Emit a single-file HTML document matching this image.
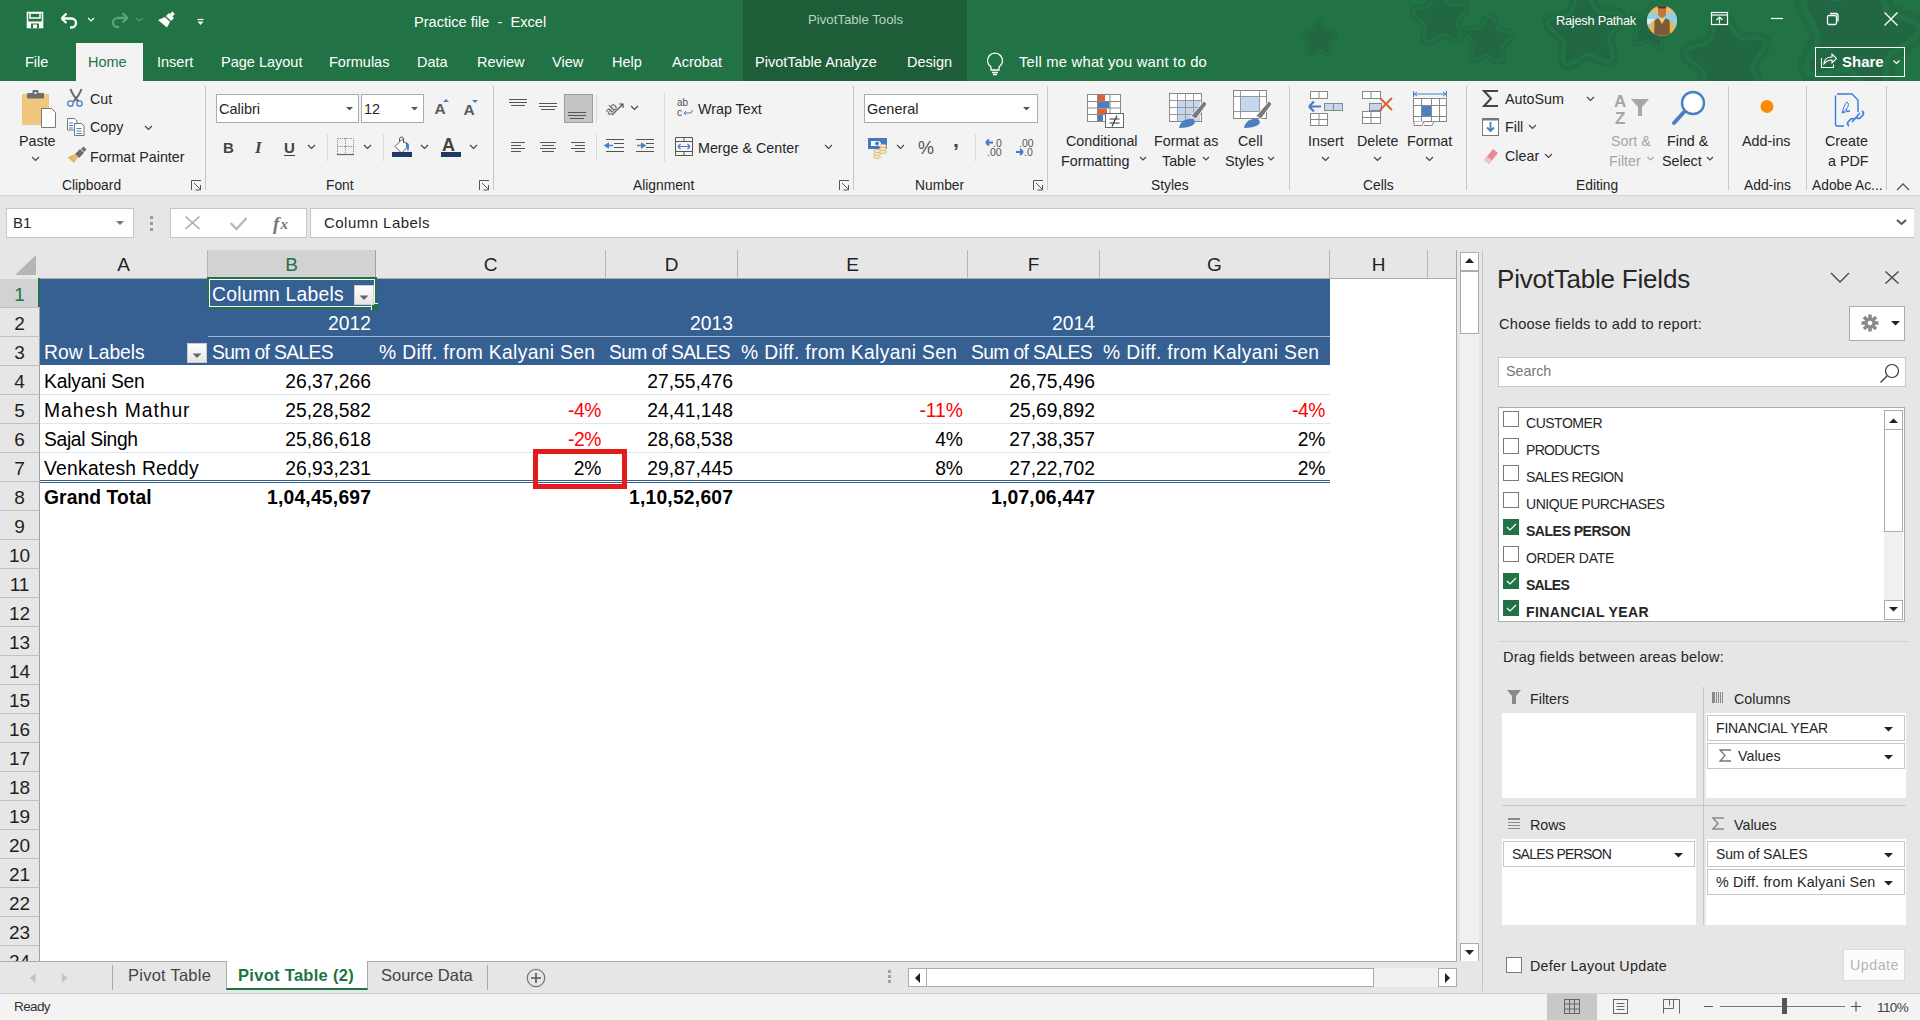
<!DOCTYPE html>
<html><head><meta charset="utf-8">
<style>
*{margin:0;padding:0;box-sizing:border-box}
html,body{width:1920px;height:1020px;overflow:hidden;background:#fff;font-family:"Liberation Sans",sans-serif;color:#262626}
.a{position:absolute}
.t{position:absolute;white-space:nowrap;line-height:1}
svg{position:absolute;overflow:visible}
/* title */
#title{left:0;top:0;width:1920px;height:81px;background:#217346}
#ctx{left:743px;top:0;width:224px;height:81px;background:#1d5e38}
.tab{position:absolute;top:54.5px;font-size:14.5px;color:#fff;white-space:nowrap;line-height:1}
#hometab{left:76px;top:43px;width:67px;height:38px;background:#f3f3f3}
/* ribbon */
#ribbon{left:0;top:81px;width:1920px;height:115px;background:#f3f3f3;border-bottom:1px solid #d6d6d6}
.rl{position:absolute;font-size:14.3px;color:#262626;white-space:nowrap;line-height:1}
.gl{position:absolute;top:179px;font-size:13.8px;color:#262626;white-space:nowrap;line-height:1}
.sep{position:absolute;width:1px;background:#c8c8c8}
.dis{color:#a6a6a6}
/* formula bar */
#fbar{left:0;top:196px;width:1920px;height:54px;background:#e6e6e6}
.box{position:absolute;background:#fff;border:1px solid #c6c6c6}
/* sheet */
#sheet{left:0;top:250px;width:1456px;height:711px;background:#fff}
.colh{position:absolute;top:250px;height:29px;background:#e6e6e6;border-right:1px solid #b4b4b4;border-bottom:1px solid #ababab;font-size:19px;color:#1f1f1f;text-align:center;line-height:30px}
.rowh{position:absolute;left:0;width:40px;height:29px;background:#e6e6e6;border-right:1px solid #9f9f9f;border-bottom:1px solid #c0c0c0;font-size:19px;color:#1f1f1f;text-align:center;line-height:31px}
.c{position:absolute;font-size:19.3px;color:#000;white-space:nowrap;line-height:1}
.w{color:#fff}
.r{color:#f00}
.b{font-weight:bold}
</style></head><body>

<!-- TITLE BAR -->
<div id="title" class="a"></div>
<div id="ctx" class="a"></div>
<div id="hometab" class="a"></div>
<!-- stars -->
<svg width="1920" height="81" style="left:0;top:0">
 
 <g fill="none" stroke="#216a42" stroke-width="7"><path d="M0,-20 C4,-20 6,-9 9,-7 C12,-5 22,-7 23,-3 C24,1 15,6 14,10 C13,14 18,22 14,24 C10,26 3,19 0,19 C-3,19 -10,26 -14,24 C-18,22 -13,14 -14,10 C-15,6 -24,1 -23,-3 C-22,-7 -12,-5 -9,-7 C-6,-9 -4,-20 0,-20Z" transform="translate(1319,36) scale(0.72)"/>
  <path d="M0,-20 C4,-20 6,-9 9,-7 C12,-5 22,-7 23,-3 C24,1 15,6 14,10 C13,14 18,22 14,24 C10,26 3,19 0,19 C-3,19 -10,26 -14,24 C-18,22 -13,14 -14,10 C-15,6 -24,1 -23,-3 C-22,-7 -12,-5 -9,-7 C-6,-9 -4,-20 0,-20Z" transform="translate(1440,13) scale(1.15) rotate(-5)"/>
  <path d="M0,-20 C4,-20 6,-9 9,-7 C12,-5 22,-7 23,-3 C24,1 15,6 14,10 C13,14 18,22 14,24 C10,26 3,19 0,19 C-3,19 -10,26 -14,24 C-18,22 -13,14 -14,10 C-15,6 -24,1 -23,-3 C-22,-7 -12,-5 -9,-7 C-6,-9 -4,-20 0,-20Z" transform="translate(1489,36) scale(1.0) rotate(5)"/>
  <path d="M0,-20 C4,-20 6,-9 9,-7 C12,-5 22,-7 23,-3 C24,1 15,6 14,10 C13,14 18,22 14,24 C10,26 3,19 0,19 C-3,19 -10,26 -14,24 C-18,22 -13,14 -14,10 C-15,6 -24,1 -23,-3 C-22,-7 -12,-5 -9,-7 C-6,-9 -4,-20 0,-20Z" transform="translate(1585,24) scale(1.6) rotate(-5)"/>
  <path d="M0,-20 C4,-20 6,-9 9,-7 C12,-5 22,-7 23,-3 C24,1 15,6 14,10 C13,14 18,22 14,24 C10,26 3,19 0,19 C-3,19 -10,26 -14,24 C-18,22 -13,14 -14,10 C-15,6 -24,1 -23,-3 C-22,-7 -12,-5 -9,-7 C-6,-9 -4,-20 0,-20Z" transform="translate(1651,24) scale(0.9) rotate(10)"/>
  <path d="M0,-20 C4,-20 6,-9 9,-7 C12,-5 22,-7 23,-3 C24,1 15,6 14,10 C13,14 18,22 14,24 C10,26 3,19 0,19 C-3,19 -10,26 -14,24 C-18,22 -13,14 -14,10 C-15,6 -24,1 -23,-3 C-22,-7 -12,-5 -9,-7 C-6,-9 -4,-20 0,-20Z" transform="translate(1726,52) scale(1.75) rotate(-8)"/>
  <path d="M0,-20 C4,-20 6,-9 9,-7 C12,-5 22,-7 23,-3 C24,1 15,6 14,10 C13,14 18,22 14,24 C10,26 3,19 0,19 C-3,19 -10,26 -14,24 C-18,22 -13,14 -14,10 C-15,6 -24,1 -23,-3 C-22,-7 -12,-5 -9,-7 C-6,-9 -4,-20 0,-20Z" transform="translate(1860,22) scale(2.6) rotate(15)"/></g><g fill="#226743" stroke="#217346" stroke-width="2.2"><path d="M0,-20 C4,-20 6,-9 9,-7 C12,-5 22,-7 23,-3 C24,1 15,6 14,10 C13,14 18,22 14,24 C10,26 3,19 0,19 C-3,19 -10,26 -14,24 C-18,22 -13,14 -14,10 C-15,6 -24,1 -23,-3 C-22,-7 -12,-5 -9,-7 C-6,-9 -4,-20 0,-20Z" transform="translate(1319,36) scale(0.72)"/>
  <path d="M0,-20 C4,-20 6,-9 9,-7 C12,-5 22,-7 23,-3 C24,1 15,6 14,10 C13,14 18,22 14,24 C10,26 3,19 0,19 C-3,19 -10,26 -14,24 C-18,22 -13,14 -14,10 C-15,6 -24,1 -23,-3 C-22,-7 -12,-5 -9,-7 C-6,-9 -4,-20 0,-20Z" transform="translate(1440,13) scale(1.15) rotate(-5)"/>
  <path d="M0,-20 C4,-20 6,-9 9,-7 C12,-5 22,-7 23,-3 C24,1 15,6 14,10 C13,14 18,22 14,24 C10,26 3,19 0,19 C-3,19 -10,26 -14,24 C-18,22 -13,14 -14,10 C-15,6 -24,1 -23,-3 C-22,-7 -12,-5 -9,-7 C-6,-9 -4,-20 0,-20Z" transform="translate(1489,36) scale(1.0) rotate(5)"/>
  <path d="M0,-20 C4,-20 6,-9 9,-7 C12,-5 22,-7 23,-3 C24,1 15,6 14,10 C13,14 18,22 14,24 C10,26 3,19 0,19 C-3,19 -10,26 -14,24 C-18,22 -13,14 -14,10 C-15,6 -24,1 -23,-3 C-22,-7 -12,-5 -9,-7 C-6,-9 -4,-20 0,-20Z" transform="translate(1585,24) scale(1.6) rotate(-5)"/>
  <path d="M0,-20 C4,-20 6,-9 9,-7 C12,-5 22,-7 23,-3 C24,1 15,6 14,10 C13,14 18,22 14,24 C10,26 3,19 0,19 C-3,19 -10,26 -14,24 C-18,22 -13,14 -14,10 C-15,6 -24,1 -23,-3 C-22,-7 -12,-5 -9,-7 C-6,-9 -4,-20 0,-20Z" transform="translate(1651,24) scale(0.9) rotate(10)"/>
  <path d="M0,-20 C4,-20 6,-9 9,-7 C12,-5 22,-7 23,-3 C24,1 15,6 14,10 C13,14 18,22 14,24 C10,26 3,19 0,19 C-3,19 -10,26 -14,24 C-18,22 -13,14 -14,10 C-15,6 -24,1 -23,-3 C-22,-7 -12,-5 -9,-7 C-6,-9 -4,-20 0,-20Z" transform="translate(1726,52) scale(1.75) rotate(-8)"/>
  <path d="M0,-20 C4,-20 6,-9 9,-7 C12,-5 22,-7 23,-3 C24,1 15,6 14,10 C13,14 18,22 14,24 C10,26 3,19 0,19 C-3,19 -10,26 -14,24 C-18,22 -13,14 -14,10 C-15,6 -24,1 -23,-3 C-22,-7 -12,-5 -9,-7 C-6,-9 -4,-20 0,-20Z" transform="translate(1860,22) scale(2.6) rotate(15)"/></g>
</svg>
<!-- QAT icons -->
<svg width="240" height="43" style="left:0;top:0">
 <!-- save -->
 <path d="M27.5,12.5 h15 v15 h-15z" fill="none" stroke="#fff" stroke-width="1.6"/>
 <rect x="30" y="13" width="10" height="5" fill="none" stroke="#fff" stroke-width="1.5"/>
 <rect x="27" y="21.5" width="16" height="6.5" fill="#fff"/>
 <rect x="31" y="23.5" width="8" height="4.5" fill="#217346"/>
 <rect x="33" y="24.5" width="4" height="3.5" fill="#fff"/>
 <!-- undo -->
 <path d="M63,18.5 h8.5 a4.5,4.5 0 0 1 0,9 h-1.5" fill="none" stroke="#fff" stroke-width="2.3"/>
 <path d="M61.5,18.5 l5,-5 M61.5,18.5 l5,4.5" fill="none" stroke="#fff" stroke-width="2.3"/>
 <path d="M88,18 l3,3 l3,-3" fill="none" stroke="#fff" stroke-width="1.2"/>
 <!-- redo -->
 <path d="M126,18 h-8.5 a4.5,4.5 0 0 0 0,9 h1.5" fill="none" stroke="#5aa27a" stroke-width="2.3"/>
 <path d="M127.5,18 l-5,-5 M127.5,18 l-5,4.5" fill="none" stroke="#5aa27a" stroke-width="2.3"/>
 <path d="M136,18 l3.5,3 l3.5,-3" fill="none" stroke="#4f9a70" stroke-width="1.2"/>
 <!-- brush -->
 <path d="M158,20 l7,-3 l5,5 l-3,5.5z" fill="#fff"/>
 <path d="M166,16 l3,-3 l5,5 l-3,3z" fill="#fff"/>
 <rect x="170.5" y="12" width="3.5" height="3.5" transform="rotate(45 172 14)" fill="#fff"/>
 <!-- customize -->
 <path d="M197.5,19.5 h6" stroke="#fff" stroke-width="1.2"/>
 <path d="M197.5,21.5 h6 l-3,3.5z" fill="#fff"/>
</svg>
<div class="t" style="left:414px;top:15px;font-size:14.6px;color:#fff">Practice file&nbsp; -&nbsp; Excel</div>
<div class="t" style="left:808px;top:13px;font-size:13.2px;color:#b9d2c3">PivotTable Tools</div>
<div class="t" style="left:1556px;top:15px;font-size:12.8px;color:#fff;letter-spacing:-0.25px">Rajesh Pathak</div>
<!-- avatar -->
<svg width="40" height="40" style="left:1645px;top:0">
 <defs><clipPath id="avc"><circle cx="17" cy="20.8" r="15"/></clipPath></defs>
 <g clip-path="url(#avc)">
  <rect x="0" y="0" width="40" height="40" fill="#f2bd62"/>
  <rect x="0" y="13" width="34" height="14" fill="#8fd0e8"/>
  <rect x="0" y="19" width="12" height="5" fill="#d8eef6"/>
  <path d="M3,40 L6,22 Q17,16 28,22 L31,40z" fill="#eab552"/>
  <path d="M9,40 L9.5,20 Q17,15 24.5,20 L25,40z" fill="#7c5a3a"/>
  <path d="M13.5,18 L17,24 L20.5,18z" fill="#f0d070"/>
  <rect x="13" y="6" width="8" height="11" rx="3.5" fill="#c2753c"/>
  <rect x="12.5" y="5.5" width="9" height="3" rx="1.5" fill="#5a3a26"/>
 </g>
</svg>
<svg width="260" height="43" style="left:1660px;top:0">
 <!-- presentation -->
 <rect x="51.5" y="12.5" width="16" height="12" fill="none" stroke="#fff" stroke-width="1.2"/>
 <path d="M51.5,15 h16" stroke="#fff" stroke-width="1.2"/>
 <path d="M59.5,23.5 v-6 M56.5,20 l3,-3 l3,3" fill="none" stroke="#fff" stroke-width="1.2"/>
 <!-- minimize -->
 <path d="M111,18.5 h12" stroke="#fff" stroke-width="1.2"/>
 <!-- restore -->
 <rect x="167.5" y="15.5" width="9" height="9" rx="1.5" fill="none" stroke="#fff" stroke-width="1.3"/>
 <path d="M170,13.5 h6 a2,2 0 0 1 2,2 v6" fill="none" stroke="#fff" stroke-width="1.3"/>
 <!-- close -->
 <path d="M224.5,12.5 l13,13 M237.5,12.5 l-13,13" stroke="#fff" stroke-width="1.4"/>
</svg>
<!-- tabs -->
<div class="tab" style="left:25px">File</div>
<div class="tab" style="left:88px;color:#217346">Home</div>
<div class="tab" style="left:157px">Insert</div>
<div class="tab" style="left:221px">Page Layout</div>
<div class="tab" style="left:329px">Formulas</div>
<div class="tab" style="left:417px">Data</div>
<div class="tab" style="left:477px">Review</div>
<div class="tab" style="left:552px">View</div>
<div class="tab" style="left:612px">Help</div>
<div class="tab" style="left:672px">Acrobat</div>
<div class="tab" style="left:755px">PivotTable Analyze</div>
<div class="tab" style="left:907px">Design</div>
<svg width="30" height="30" style="left:980px;top:50px">
 <path d="M11,17 a7.5,7.5 0 1 1 8,0 v3 h-8z" fill="none" stroke="#fff" stroke-width="1.3"/>
 <path d="M12,22.5 h6 M13,24.5 h4" stroke="#fff" stroke-width="1.3"/>
</svg>
<div class="tab" style="left:1019px;font-size:14.8px;letter-spacing:0.2px">Tell me what you want to do</div>
<div class="a" style="left:1815px;top:47px;width:90px;height:30px;border:1px solid #fff"></div>
<svg width="30" height="30" style="left:1819px;top:48px">
 <path d="M2.5,10 v9.5 h12 v-3" fill="none" stroke="#fff" stroke-width="1.1"/>
 <path d="M5,16 q0,-7 8,-7 v-3 l4.5,4.5 l-4.5,4.5 v-3 q-5,0 -8,4z" fill="none" stroke="#fff" stroke-width="1.1"/>
</svg>
<div class="t" style="left:1842px;top:54px;font-size:15px;font-weight:bold;color:#fff">Share</div>
<svg width="14" height="14" style="left:1892px;top:56px"><path d="M1.5,4.5 l3,3 l3,-3" fill="none" stroke="#fff" stroke-width="1.2"/></svg>

<!-- RIBBON -->
<div id="ribbon" class="a"></div>
<!-- separators -->
<div class="sep" style="left:205px;top:86px;height:104px"></div>
<div class="sep" style="left:493px;top:86px;height:104px"></div>
<div class="sep" style="left:853px;top:86px;height:104px"></div>
<div class="sep" style="left:1047px;top:86px;height:104px"></div>
<div class="sep" style="left:1289px;top:86px;height:104px"></div>
<div class="sep" style="left:1466px;top:86px;height:104px"></div>
<div class="sep" style="left:1728px;top:86px;height:104px"></div>
<div class="sep" style="left:1806px;top:86px;height:104px"></div>
<div class="sep" style="left:1886px;top:86px;height:104px"></div>
<div class="sep" style="left:327px;top:134px;height:27px;background:#d8d8d8"></div>
<div class="sep" style="left:383px;top:134px;height:27px;background:#d8d8d8"></div>
<div class="sep" style="left:596px;top:95px;height:27px;background:#d8d8d8"></div>
<div class="sep" style="left:596px;top:134px;height:27px;background:#d8d8d8"></div>
<div class="sep" style="left:664px;top:93px;height:69px;background:#d8d8d8"></div>
<div class="sep" style="left:975px;top:134px;height:27px;background:#d8d8d8"></div>
<!-- group labels -->
<div class="gl" style="left:62px">Clipboard</div>
<div class="gl" style="left:326px">Font</div>
<div class="gl" style="left:633px">Alignment</div>
<div class="gl" style="left:915px">Number</div>
<div class="gl" style="left:1151px">Styles</div>
<div class="gl" style="left:1363px">Cells</div>
<div class="gl" style="left:1576px">Editing</div>
<div class="gl" style="left:1744px">Add-ins</div>
<div class="gl" style="left:1812px">Adobe Ac...</div>
<!-- launchers -->
<svg width="1920" height="200" style="left:0;top:0">
 <g fill="none" stroke="#555" stroke-width="1">
  <path d="M191.5,190 v-9.5 h9.5 M194,183 l6.5,6.5 M200.5,185 v5 h-5"/>
  <path d="M479.5,190 v-9.5 h9.5 M482,183 l6.5,6.5 M488.5,185 v5 h-5"/>
  <path d="M839.5,190 v-9.5 h9.5 M842,183 l6.5,6.5 M848.5,185 v5 h-5"/>
  <path d="M1033.5,190 v-9.5 h9.5 M1036,183 l6.5,6.5 M1042.5,185 v5 h-5"/>
  <path d="M1897,190 l6,-6 l6,6" stroke-width="1.3"/>
 </g>
 <!-- chevrons -->
 <g fill="none" stroke="#444" stroke-width="1.2">
  <path d="M32,157 l3.5,3.5 l3.5,-3.5"/>
  <path d="M145,126 l3.5,3.5 l3.5,-3.5"/>
  <path d="M308,145 l3.5,3.5 l3.5,-3.5"/>
  <path d="M364,145 l3.5,3.5 l3.5,-3.5"/>
  <path d="M421,145 l3.5,3.5 l3.5,-3.5"/>
  <path d="M470,145 l3.5,3.5 l3.5,-3.5"/>
  <path d="M631,106 l3.5,3.5 l3.5,-3.5"/>
  <path d="M825,145 l3.5,3.5 l3.5,-3.5"/>
  <path d="M897,145 l3.5,3.5 l3.5,-3.5"/>
  <path d="M1322,157 l3.5,3.5 l3.5,-3.5"/>
  <path d="M1374,157 l3.5,3.5 l3.5,-3.5"/>
  <path d="M1426,157 l3.5,3.5 l3.5,-3.5"/>
  <path d="M1587,97 l3.5,3.5 l3.5,-3.5"/>
  <path d="M1529,125 l3.5,3.5 l3.5,-3.5"/>
  <path d="M1545,154 l3.5,3.5 l3.5,-3.5"/>
  <path d="M1140,157 l3,3 l3,-3"/>
  <path d="M1203,157 l3,3 l3,-3"/>
  <path d="M1268,157 l3,3 l3,-3"/>
  <path d="M1707,157 l3,3 l3,-3"/>
  <path d="M1647.5,157 l3,3 l3,-3" stroke="#aaa"/>
 </g>
</svg>
<!-- Clipboard -->
<svg width="200" height="200" style="left:0;top:0">
 <rect x="22" y="94" width="27" height="31" rx="1" fill="#f0c77f"/>
 <rect x="27" y="93" width="17" height="5.5" rx="1" fill="#6d6d6d"/>
 <rect x="32.5" y="90" width="6" height="4" rx="1" fill="#6d6d6d"/>
 <rect x="34.5" y="92" width="2" height="2" fill="#f3f3f3"/>
 <path d="M41.5,108.5 h10 l4,4 v15 h-14z" fill="#fff" stroke="#777" stroke-width="1"/>
 <!-- scissors -->
 <path d="M70.5,89 q2,6 8,12.5 M81.5,89 q-2,6 -8,12.5" fill="none" stroke="#666" stroke-width="2"/>
 <circle cx="70.5" cy="103.5" r="2.7" fill="none" stroke="#4a7fc1" stroke-width="1.3"/>
 <circle cx="79.5" cy="103.5" r="2.7" fill="none" stroke="#4a7fc1" stroke-width="1.3"/>
 <!-- copy -->
 <path d="M67.5,118.5 h7 l2.5,2.5 v9 h-9.5z" fill="#fff" stroke="#777" stroke-width="1"/>
 <path d="M74.5,123.5 h7 l2.5,2.5 v9.5 h-9.5z" fill="#fff" stroke="#777" stroke-width="1"/>
 <path d="M69,123 h4 M69,125.5 h4 M69,128 h4 M76.5,128.5 h5 M76.5,131 h5 M76.5,133.5 h5" stroke="#4a7fc1" stroke-width="1"/>
 <!-- format painter brush -->
 <path d="M67.5,157.5 l7,-3.5 l3.5,3.5 l-4,5.5z" fill="#e8b86a"/>
 <path d="M75,154 l5,-5 l4,4 l-5,5z" fill="#6d6d6d"/>
 <path d="M81,149 l2.5,-2.5 l3,3 l-2.5,2.5z" fill="#6d6d6d"/>
</svg>
<div class="rl" style="left:19px;top:134px">Paste</div>
<div class="rl" style="left:90px;top:92px">Cut</div>
<div class="rl" style="left:90px;top:120px">Copy</div>
<div class="rl" style="left:90px;top:150px">Format Painter</div>
<!-- Font -->
<div class="box" style="left:216px;top:94px;width:143px;height:29px;border-color:#ababab"></div>
<div class="box" style="left:361px;top:94px;width:63px;height:29px;border-color:#ababab"></div>
<div class="rl" style="left:219px;top:102px;font-size:14.5px">Calibri</div>
<div class="rl" style="left:364px;top:102px;font-size:14.5px">12</div>
<svg width="1920" height="200" style="left:0;top:0">
 <path d="M346,107 h7 l-3.5,3.5z" fill="#555"/>
 <path d="M411,107 h7 l-3.5,3.5z" fill="#555"/>
 <!-- grow/shrink -->
 <text x="434.5" y="114" font-family="Liberation Sans" font-size="15.5" font-weight="bold" fill="#5a5a5a">A</text>
 <path d="M443,102 l3,-3 l3,3z" fill="#4a7fc1"/>
 <text x="463.5" y="115" font-family="Liberation Sans" font-size="15.5" font-weight="bold" fill="#5a5a5a">A</text>
 <path d="M472,100 h6 l-3,3z" fill="#4a7fc1"/>
 <!-- B I U -->
 <text x="223" y="153" font-family="Liberation Sans" font-size="15" font-weight="bold" fill="#444">B</text>
 <text x="255" y="153" font-family="Liberation Serif" font-size="17" font-style="italic" font-weight="bold" fill="#444">I</text>
 <text x="284" y="153" font-family="Liberation Sans" font-size="15" font-weight="bold" fill="#444">U</text>
 <path d="M284,155.5 h11" stroke="#444" stroke-width="1"/>
 <!-- borders -->
 <g stroke="#777" stroke-width="1" stroke-dasharray="1,1.2" fill="none">
  <rect x="337.5" y="138.5" width="16" height="16"/>
  <path d="M345.5,138.5 v16 M337.5,146.5 h16"/>
 </g>
 <path d="M337,154.5 h17" stroke="#666" stroke-width="1.2"/>
 <!-- fill color -->
 <path d="M395,146.5 l7,-7 l6.5,6.5 l-7,7z" fill="#fff" stroke="#555" stroke-width="1"/>
 <path d="M399.5,141.5 v-2.5 a2,2 0 0 1 4,0 v4" fill="none" stroke="#555" stroke-width="1"/>
 <path d="M406,142 q5,1 2,10 q-1,-4 -2,-5z" fill="#4a7fc1"/>
 <rect x="392" y="152" width="20" height="5" fill="#1f3864"/>
 <!-- font color -->
 <text x="442" y="151" font-family="Liberation Sans" font-size="18" font-weight="bold" fill="#444">A</text>
 <rect x="441" y="152" width="20" height="5" fill="#1f3864"/>
</svg>
<!-- Alignment -->
<div class="a" style="left:564px;top:94px;width:29px;height:29px;background:#c5c5c5;border:1px solid #9d9d9d"></div>
<svg width="1920" height="200" style="left:0;top:0">
 <g stroke="#555" stroke-width="1">
  <path d="M509,99.5 h18 M509,102.5 h18 M511,105.5 h14"/>
  <path d="M539,103.5 h18 M539,106.5 h18 M541,109.5 h14"/>
  <path d="M568,112.5 h18 M568,115.5 h18 M570,118.5 h14"/>
  <path d="M511,142.5 h14 M511,145.5 h10 M511,148.5 h14 M511,151.5 h10"/>
  <path d="M540,142.5 h16 M542,145.5 h12 M540,148.5 h16 M542,151.5 h12"/>
  <path d="M571,142.5 h14 M575,145.5 h10 M571,148.5 h14 M575,151.5 h10"/>
  <path d="M606,139.5 h18 M614,143.5 h10 M614,147.5 h10 M606,151.5 h18"/>
  <path d="M636,139.5 h18 M646,143.5 h8 M646,147.5 h8 M636,151.5 h18"/>
  <path d="M675.5,137.5 h17 v18 h-17z" fill="none"/>
  <path d="M675.5,141.5 h17 M675.5,151.5 h17 M684,137.5 v4 M684,151.5 v4" fill="none"/>
 </g>
 <path d="M608,144 l-2.5,1.5 l2.5,1.5z" fill="#4a7fc1" stroke="#4a7fc1" stroke-width="2"/>
 <path d="M608,145.5 h5" stroke="#4a7fc1" stroke-width="1.5"/>
 <path d="M642,144 l2.5,1.5 l-2.5,1.5z" fill="#4a7fc1" stroke="#4a7fc1" stroke-width="2"/>
 <path d="M637,145.5 h5" stroke="#4a7fc1" stroke-width="1.5"/>
 <path d="M678,146.5 h12 M678,146.5 l2.5,-2.5 M678,146.5 l2.5,2.5 M690,146.5 l-2.5,-2.5 M690,146.5 l-2.5,2.5" stroke="#4a7fc1" stroke-width="1.2" fill="none"/>
 <!-- orientation -->
 <text x="604" y="113" font-family="Liberation Sans" font-size="11" fill="#555" transform="rotate(-45 610 108)">ab</text>
 <path d="M612,115 l11,-11 M619,104 h4 v4" fill="none" stroke="#555" stroke-width="1.2"/>
 <!-- wrap text -->
 <text x="677" y="106" font-family="Liberation Sans" font-size="10" fill="#555">ab</text>
 <text x="677" y="116" font-family="Liberation Sans" font-size="10" fill="#555">c</text>
 <path d="M684,113 h6 q2,0 2,-2 v-1 M684,113 l2,-2 M684,113 l2,2" fill="none" stroke="#4a7fc1" stroke-width="1"/>
</svg>
<div class="rl" style="left:698px;top:102px">Wrap Text</div>
<div class="rl" style="left:698px;top:140.5px">Merge &amp; Center</div>
<!-- Number -->
<div class="box" style="left:864px;top:94px;width:174px;height:29px;border-color:#ababab"></div>
<div class="rl" style="left:867px;top:102px;font-size:14.5px">General</div>
<svg width="1920" height="200" style="left:0;top:0">
 <path d="M1023,107 h7 l-3.5,3.5z" fill="#555"/>
 <!-- accounting -->
 <rect x="868" y="138" width="19" height="11" fill="#3f7ac2"/>
 <path d="M871,141 h8 q3,2 3,5 h-11 z" fill="#fff"/>
 <circle cx="877" cy="143.5" r="2" fill="#3f7ac2"/>
 <g fill="#f3f3f3" stroke="#e3b96a" stroke-width="1">
  <ellipse cx="883" cy="146" rx="3.6" ry="1.4"/><ellipse cx="883" cy="149" rx="3.6" ry="1.4"/><ellipse cx="883" cy="152" rx="3.6" ry="1.4"/>
  <ellipse cx="877" cy="151" rx="3.6" ry="1.4"/><ellipse cx="877" cy="154" rx="3.6" ry="1.4"/><ellipse cx="877" cy="157" rx="3.6" ry="1.4"/>
 </g>
 <text x="918" y="154" font-family="Liberation Sans" font-size="18" fill="#555">%</text>
 <text x="953" y="147" font-family="Liberation Sans" font-size="21" font-weight="bold" fill="#444">,</text>
 <text x="993" y="146.5" font-family="Liberation Sans" font-size="10.5" fill="#555">.0</text>
 <text x="987" y="155.5" font-family="Liberation Sans" font-size="10.5" fill="#555">.00</text>
 <path d="M986,142.5 h7 M986,142.5 l3,-3 M986,142.5 l3,3" fill="none" stroke="#3f7ac2" stroke-width="1.8"/>
 <text x="1019" y="146.5" font-family="Liberation Sans" font-size="10.5" fill="#555">.00</text>
 <text x="1024" y="155.5" font-family="Liberation Sans" font-size="10.5" fill="#555">.0</text>
 <path d="M1016,152 h7 M1023,152 l-3,-3 M1023,152 l-3,3" fill="none" stroke="#3f7ac2" stroke-width="1.8"/>
</svg>
<!-- Styles -->
<svg width="1920" height="200" style="left:0;top:0">
 <!-- conditional formatting -->
 <rect x="1087.5" y="94.5" width="33" height="27" fill="#fff" stroke="#888" stroke-width="1"/>
 <path d="M1087.5,101.5 h33 M1087.5,108 h33 M1087.5,114.5 h33 M1097.5,94.5 v27 M1110,94.5 v27" stroke="#888" stroke-width="1"/>
 <rect x="1098" y="95" width="7" height="6" fill="#d9633a"/>
 <rect x="1098" y="102" width="11.5" height="6" fill="#4a7fc1"/>
 <rect x="1098" y="108.5" width="9" height="6" fill="#d9633a"/>
 <rect x="1098" y="115" width="5" height="6" fill="#4a7fc1"/>
 <rect x="1105.5" y="113.5" width="18" height="14" fill="#fff" stroke="#666" stroke-width="1"/>
 <path d="M1109.5,119 h10 M1109.5,123 h10 M1117,115.5 l-5,11" stroke="#333" stroke-width="1.1"/>
 <!-- format as table -->
 <rect x="1169.5" y="93.5" width="32" height="28" fill="#fff" stroke="#888"/>
 <rect x="1178" y="101" width="22" height="20" fill="#c4d7ee"/>
 <path d="M1169.5,100.5 h32 M1169.5,107.5 h32 M1169.5,114.5 h32 M1177.5,93.5 v28 M1185.5,93.5 v28 M1193.5,93.5 v28" stroke="#999" stroke-width="1"/>
 <path d="M1191,116 l13,-15 l3,3 l-11,15z" fill="#7a7a7a" stroke="#f3f3f3" stroke-width="1"/>
 <path d="M1179,128 q1,-7 9,-9 q4,-1 6,1 q2,3 -1,5 q-5,3 -14,3z" fill="#4a7fc1"/>
 <!-- cell styles -->
 <rect x="1233.5" y="90.5" width="33" height="28" fill="#fff" stroke="#888"/>
 <rect x="1241" y="97" width="18" height="14" fill="#c4d7ee"/>
 <path d="M1233.5,96.5 h33 M1233.5,111.5 h33 M1240.5,90.5 v28 M1259.5,90.5 v28" stroke="#999" stroke-width="1"/>
 <path d="M1256,116 l13,-15 l3,3 l-11,15z" fill="#7a7a7a" stroke="#f3f3f3" stroke-width="1"/>
 <path d="M1244,128 q1,-7 9,-9 q4,-1 6,1 q2,3 -1,5 q-5,3 -14,3z" fill="#4a7fc1"/>
</svg>
<div class="rl" style="left:1066px;top:134px">Conditional</div>
<div class="rl" style="left:1061px;top:154px">Formatting</div>
<div class="rl" style="left:1154px;top:134px">Format as</div>
<div class="rl" style="left:1162px;top:154px">Table</div>
<div class="rl" style="left:1238px;top:134px">Cell</div>
<div class="rl" style="left:1225px;top:154px">Styles</div>
<!-- Cells -->
<svg width="1920" height="200" style="left:0;top:0">
 <g fill="#fff" stroke="#888" stroke-width="1">
  <rect x="1310.5" y="91.5" width="17" height="7"/><path d="M1319,91.5 v7"/>
  <rect x="1310.5" y="113.5" width="17" height="12"/><path d="M1319,113.5 v12 M1310.5,119.5 h17"/>
  <rect x="1324.5" y="103.5" width="18" height="7" fill="#c4d7ee"/><path d="M1333.5,103.5 v7"/>
  <rect x="1362.5" y="91.5" width="18" height="7"/><path d="M1371,91.5 v7"/>
  <rect x="1362.5" y="111.5" width="18" height="12"/><path d="M1371,111.5 v12 M1362.5,117.5 h18"/>
  <rect x="1369.5" y="103.5" width="12" height="7" fill="#c4d7ee"/>
  <rect x="1413.5" y="98.5" width="33" height="23"/>
  <path d="M1413.5,105.5 h33 M1413.5,116.5 h33 M1421.5,98.5 v23 M1431.5,98.5 v23 M1439.5,98.5 v23"/>
  <path d="M1414,121.5 v4 h8 l2,-4 M1424,125.5 h8 l2,-4"/>
 </g>
 <path d="M1309,106.5 h12 M1309,106.5 l5,-5 M1309,106.5 l5,5" fill="none" stroke="#4a7fc1" stroke-width="2.2"/>
 <path d="M1380,98 l12,12 M1392,98 l-12,12" stroke="#d9633a" stroke-width="2"/>
 <rect x="1422" y="106" width="9" height="10" fill="#4a7fc1"/>
 <path d="M1414,94 h32 M1414,94 l3,-2 M1414,94 l3,2 M1446,94 l-3,-2 M1446,94 l-3,2 M1413.5,91 v6 M1446.5,91 v6" fill="none" stroke="#4a7fc1" stroke-width="1"/>
</svg>
<div class="rl" style="left:1308px;top:134px">Insert</div>
<div class="rl" style="left:1357px;top:134px">Delete</div>
<div class="rl" style="left:1407px;top:134px">Format</div>
<!-- Editing -->
<svg width="1920" height="200" style="left:0;top:0">
 <path d="M1498,91 h-14 l7,7.5 l-7,7.5 h14" fill="none" stroke="#444" stroke-width="2"/>
 <rect x="1482.5" y="118.5" width="16" height="17" fill="#fff" stroke="#777"/>
 <path d="M1482.5,119.5 h16" stroke="#777" stroke-width="2"/>
 <path d="M1490.5,122 v9 M1487,127.5 l3.5,3.5 l3.5,-3.5" fill="none" stroke="#4a7fc1" stroke-width="1.8"/>
 <path d="M1484,160 l9,-11 l5,4 l-9,11z" fill="#e68a9a"/>
 <path d="M1484,160 l3,-3.5 l5,4 l-3,3.5z" fill="#f3c3cb"/>
 <!-- sort filter -->
 <text x="1614" y="107" font-family="Liberation Sans" font-size="17" font-weight="bold" fill="#a6a6a6">A</text>
 <text x="1615" y="123.5" font-family="Liberation Sans" font-size="17" font-weight="bold" fill="#a6a6a6">Z</text>
 <path d="M1631,99 h18 l-7,8 v9 h-4 v-9z" fill="#a6a6a6"/>
 <!-- find -->
 <circle cx="1693" cy="103" r="11" fill="#fff" stroke="#4a7fc1" stroke-width="2.4"/>
 <path d="M1684,112 l-10,11" stroke="#4a7fc1" stroke-width="4" stroke-linecap="round"/>
 <!-- add-ins dot -->
 <circle cx="1767" cy="106.5" r="6.5" fill="#ff8c00"/>
 <!-- pdf -->
 <path d="M1837,94 h15 l6,6 v12 M1844,126 h-7 a1.5,1.5 0 0 1 -1.5,-1.5 v-29" fill="none" stroke="#3d7ae0" stroke-width="1.4"/>
 <path d="M1842,113 q4,-14 6,-10 q2,4 -6,10 q6,-2 8,-2 q-3,1 -4,-2" fill="none" stroke="#3d7ae0" stroke-width="1"/>
 <path d="M1852,122 l8,-9 M1849,126 a3,3 0 0 1 -1,-4 l3,-3 a3,3 0 0 1 4,1 M1862,111 a3,3 0 0 1 1,4 l-3,3 a3,3 0 0 1 -4,-1" fill="none" stroke="#3d7ae0" stroke-width="1.6"/>
</svg>
<div class="rl" style="left:1505px;top:92px">AutoSum</div>
<div class="rl" style="left:1505px;top:120px">Fill</div>
<div class="rl" style="left:1505px;top:149px">Clear</div>
<div class="rl dis" style="left:1611px;top:134px">Sort &amp;</div>
<div class="rl dis" style="left:1609px;top:154px">Filter</div>
<div class="rl" style="left:1667px;top:134px">Find &amp;</div>
<div class="rl" style="left:1662px;top:154px">Select</div>
<div class="rl" style="left:1742px;top:134px">Add-ins</div>
<div class="rl" style="left:1825px;top:134px">Create</div>
<div class="rl" style="left:1828px;top:154px">a PDF</div>

<!-- FORMULA BAR -->
<div id="fbar" class="a"></div>
<div class="box" style="left:6px;top:208px;width:128px;height:30px;border-color:#c6c6c6"></div>
<div class="t" style="left:13px;top:215px;font-size:15px;color:#262626">B1</div>
<div class="box" style="left:170px;top:208px;width:137px;height:30px;border-color:#c6c6c6"></div>
<div class="box" style="left:310px;top:208px;width:1604px;height:30px;border-color:#c6c6c6;border-right:0"></div>
<svg width="1920" height="260" style="left:0;top:0">
 <path d="M116,221 h8 l-4,4z" fill="#777"/>
 <rect x="150" y="216" width="3" height="3" fill="#9a9a9a"/>
 <rect x="150" y="222" width="3" height="3" fill="#9a9a9a"/>
 <rect x="150" y="228" width="3" height="3" fill="#9a9a9a"/>
 <path d="M185.5,216.5 l14,12.5 M199.5,216.5 l-14,12.5" stroke="#a8a8a8" stroke-width="1.6"/>
 <path d="M230.5,223 l6,6 l10,-11" fill="none" stroke="#b8b8b8" stroke-width="2.4"/>
 <text x="273" y="230" font-family="Liberation Serif" font-size="19" font-style="italic" font-weight="bold" fill="#777">f</text>
 <text x="280.5" y="229" font-family="Liberation Serif" font-size="15" font-style="italic" font-weight="bold" fill="#777">x</text>
 <path d="M1897,220 l4.5,4 l4.5,-4" fill="none" stroke="#555" stroke-width="2"/>
</svg>
<div class="t" style="left:324px;top:215px;font-size:15px;color:#262626;letter-spacing:0.46px">Column Labels</div>

<!-- SHEET -->
<div id="sheet" class="a"></div>
<!-- header bg -->
<div class="a" style="left:0;top:250px;width:1456px;height:29px;background:#e6e6e6;border-bottom:1px solid #ababab"></div>
<div class="a" style="left:0;top:278px;width:40px;height:683px;background:#e6e6e6;border-right:1px solid #9f9f9f"></div>
<svg width="40" height="30" style="left:0;top:250px"><path d="M36,5 v20 h-21z" fill="#b5b5b5"/></svg>
<!-- column headers -->
<div class="colh" style="left:40px;width:168px">A</div>
<div class="colh" style="left:208px;width:168px;background:#d2d2d2;color:#217346;border-right-color:#a0a0a0">B</div>
<div class="colh" style="left:376px;width:230px">C</div>
<div class="colh" style="left:606px;width:132px">D</div>
<div class="colh" style="left:738px;width:230px">E</div>
<div class="colh" style="left:968px;width:132px">F</div>
<div class="colh" style="left:1100px;width:230px">G</div>
<div class="colh" style="left:1330px;width:98px">H</div>
<div class="colh" style="left:1428px;width:28px;border-right:0"></div>
<!-- row headers -->
<div class="rowh" style="top:279px;background:#d2d2d2;color:#217346">1</div>
<div class="rowh" style="top:308px">2</div>
<div class="rowh" style="top:337px">3</div>
<div class="rowh" style="top:366px">4</div>
<div class="rowh" style="top:395px">5</div>
<div class="rowh" style="top:424px">6</div>
<div class="rowh" style="top:453px">7</div>
<div class="rowh" style="top:482px">8</div>
<div class="rowh" style="top:511px">9</div>
<div class="rowh" style="top:540px">10</div>
<div class="rowh" style="top:569px">11</div>
<div class="rowh" style="top:598px">12</div>
<div class="rowh" style="top:627px">13</div>
<div class="rowh" style="top:656px">14</div>
<div class="rowh" style="top:685px">15</div>
<div class="rowh" style="top:714px">16</div>
<div class="rowh" style="top:743px">17</div>
<div class="rowh" style="top:772px">18</div>
<div class="rowh" style="top:801px">19</div>
<div class="rowh" style="top:830px">20</div>
<div class="rowh" style="top:859px">21</div>
<div class="rowh" style="top:888px">22</div>
<div class="rowh" style="top:917px">23</div>
<div class="rowh" style="top:946px;height:15px;overflow:hidden;border-bottom:0">24</div>
<div class="a" style="left:38px;top:278px;width:2px;height:29px;background:#217346"></div>
<!-- pivot header blue -->
<div class="a" style="left:40px;top:279px;width:1290px;height:86px;background:#366092"></div>
<div class="a" style="left:208px;top:336px;width:1122px;height:1px;background:#9fb4d2"></div>
<!-- row lines -->
<div class="a" style="left:40px;top:394px;width:1290px;height:1px;background:#dce6f1"></div>
<div class="a" style="left:40px;top:423px;width:1290px;height:1px;background:#dce6f1"></div>
<div class="a" style="left:40px;top:452px;width:1290px;height:1px;background:#dce6f1"></div>
<div class="a" style="left:40px;top:480px;width:1290px;height:1px;background:#366092"></div>
<div class="a" style="left:40px;top:482px;width:1290px;height:1px;background:#366092"></div>
<!-- selection -->
<div class="a" style="left:207px;top:277px;width:170px;height:32px;border:2px solid #217346"></div>
<div class="a" style="left:209px;top:279px;width:166px;height:28px;border:1px solid #fff"></div>
<div class="a" style="left:371px;top:303px;width:7px;height:7px;background:#217346;border-left:1px solid #fff;border-top:1px solid #fff"></div>
<!-- dropdown buttons -->
<div class="a" style="left:354px;top:285px;width:20px;height:20px;background:linear-gradient(#fff,#e6e6e6);border:1px solid #ccc"></div>
<div class="a" style="left:187px;top:343px;width:20px;height:20px;background:linear-gradient(#fff,#e6e6e6);border:1px solid #ccc"></div>
<svg width="1920" height="400" style="left:0;top:0">
 <path d="M359.5,295.5 h9 l-4.5,4.5z" fill="#666"/>
 <path d="M192.5,353.5 h9 l-4.5,4.5z" fill="#666"/>
</svg>
<!-- pivot text -->
<div class="c w" style="left:212px;top:285px;letter-spacing:0.26px">Column Labels</div>
<div class="c w" style="right:1549px;top:314px">2012</div>
<div class="c w" style="right:1187px;top:314px">2013</div>
<div class="c w" style="right:825px;top:314px">2014</div>
<div class="c w" style="left:44px;top:343px">Row Labels</div>
<div class="c w" style="left:212px;top:343px;letter-spacing:-0.63px">Sum of SALES</div>
<div class="c w" style="left:379px;top:343px;letter-spacing:0.32px">% Diff. from Kalyani Sen</div>
<div class="c w" style="left:609px;top:343px;letter-spacing:-0.63px">Sum of SALES</div>
<div class="c w" style="left:741px;top:343px;letter-spacing:0.32px">% Diff. from Kalyani Sen</div>
<div class="c w" style="left:971px;top:343px;letter-spacing:-0.63px">Sum of SALES</div>
<div class="c w" style="left:1103px;top:343px;letter-spacing:0.32px">% Diff. from Kalyani Sen</div>

<div class="c" style="left:44px;top:372px;letter-spacing:-0.21px">Kalyani Sen</div>
<div class="c" style="left:44px;top:401px;letter-spacing:0.96px">Mahesh Mathur</div>
<div class="c" style="left:44px;top:430px;letter-spacing:-0.35px">Sajal Singh</div>
<div class="c" style="left:44px;top:459px;letter-spacing:0.25px">Venkatesh Reddy</div>
<div class="c b" style="left:44px;top:488px;letter-spacing:0.08px">Grand Total</div>

<div class="c" style="right:1549px;top:372px">26,37,266</div>
<div class="c" style="right:1549px;top:401px">25,28,582</div>
<div class="c" style="right:1549px;top:430px">25,86,618</div>
<div class="c" style="right:1549px;top:459px">26,93,231</div>
<div class="c b" style="right:1549px;top:488px;letter-spacing:0.22px;margin-right:-0.22px">1,04,45,697</div>

<div class="c r" style="right:1318.5px;top:401px;letter-spacing:-0.37px;margin-right:0.37px">-4%</div>
<div class="c r" style="right:1318.5px;top:430px;letter-spacing:-0.37px;margin-right:0.37px">-2%</div>
<div class="c" style="right:1318.5px;top:459px">2%</div>

<div class="c" style="right:1187px;top:372px">27,55,476</div>
<div class="c" style="right:1187px;top:401px">24,41,148</div>
<div class="c" style="right:1187px;top:430px">28,68,538</div>
<div class="c" style="right:1187px;top:459px">29,87,445</div>
<div class="c b" style="right:1187px;top:488px;letter-spacing:0.22px;margin-right:-0.22px">1,10,52,607</div>

<div class="c r" style="right:957px;top:401px">-11%</div>
<div class="c" style="right:957px;top:430px">4%</div>
<div class="c" style="right:957px;top:459px">8%</div>

<div class="c" style="right:825px;top:372px">26,75,496</div>
<div class="c" style="right:825px;top:401px">25,69,892</div>
<div class="c" style="right:825px;top:430px">27,38,357</div>
<div class="c" style="right:825px;top:459px">27,22,702</div>
<div class="c b" style="right:825px;top:488px;letter-spacing:0.22px;margin-right:-0.22px">1,07,06,447</div>

<div class="c r" style="right:594.5px;top:401px;letter-spacing:-0.37px;margin-right:0.37px">-4%</div>
<div class="c" style="right:594.5px;top:430px">2%</div>
<div class="c" style="right:594.5px;top:459px">2%</div>
<!-- red box -->
<div class="a" style="left:533px;top:449px;width:94px;height:40px;border:5px solid #e31b1b"></div>
<!-- vertical scrollbar -->
<div class="a" style="left:1456px;top:250px;width:26px;height:711px;background:#e6e6e6"></div>
<div class="a" style="left:1456px;top:250px;width:1px;height:711px;background:#ababab"></div>
<div class="a" style="left:1460px;top:252px;width:19px;height:707px;background:#f0f0f0"></div>
<div class="a" style="left:1460px;top:252px;width:19px;height:19px;background:#fff;border:1px solid #ababab"></div>
<div class="a" style="left:1460px;top:271px;width:19px;height:63px;background:#fff;border:1px solid #ababab"></div>
<div class="a" style="left:1460px;top:943px;width:19px;height:19px;background:#fff;border:1px solid #ababab"></div>
<svg width="1920" height="1020" style="left:0;top:0">
 <path d="M1465,263 h9 l-4.5,-5z" fill="#222"/>
 <path d="M1465,950 h9 l-4.5,5z" fill="#222"/>
</svg>
<div class="a" style="left:1482px;top:250px;width:1px;height:711px;background:#c6c6c6"></div>

<!-- SHEET TABS BAR -->
<div class="a" style="left:0;top:961px;width:1483px;height:33px;background:#e6e6e6"></div>
<div class="a" style="left:0;top:961px;width:1457px;height:1px;background:#ababab"></div>
<svg width="1920" height="1020" style="left:0;top:0">
 <path d="M35.5,973 v10 l-5.5,-5z" fill="#c3c3c3"/>
 <path d="M62,973 v10 l5.5,-5z" fill="#c3c3c3"/>
 <circle cx="536" cy="978" r="8.7" fill="none" stroke="#777" stroke-width="1.2"/>
 <path d="M531,978 h10 M536,973 v10" stroke="#555" stroke-width="1.6"/>
 <rect x="888" y="970" width="3" height="3" fill="#a0a0a0"/>
 <rect x="888" y="975" width="3" height="3" fill="#a0a0a0"/>
 <rect x="888" y="980" width="3" height="3" fill="#a0a0a0"/>
</svg>
<div class="a" style="left:112px;top:965px;width:1px;height:25px;background:#a8a8a8"></div>
<div class="a" style="left:487px;top:965px;width:1px;height:25px;background:#a8a8a8"></div>
<div class="t" style="left:128px;top:967px;font-size:16.5px;color:#444;letter-spacing:0.24px">Pivot Table</div>
<div class="a" style="left:226px;top:961px;width:142px;height:29px;background:#fff;border-left:1px solid #ababab;border-right:1px solid #ababab;border-bottom:2px solid #217346"></div>
<div class="t" style="left:238px;top:967px;font-size:16.5px;color:#217346;font-weight:bold;letter-spacing:0.30px">Pivot Table (2)</div>
<div class="t" style="left:381px;top:967px;font-size:16.5px;color:#444">Source Data</div>
<!-- horizontal scrollbar -->
<div class="a" style="left:908px;top:968px;width:549px;height:19px;background:#f0f0f0"></div>
<div class="a" style="left:908px;top:968px;width:19px;height:19px;background:#fff;border:1px solid #ababab"></div>
<div class="a" style="left:926px;top:968px;width:448px;height:19px;background:#fff;border:1px solid #ababab"></div>
<div class="a" style="left:1438px;top:968px;width:19px;height:19px;background:#fff;border:1px solid #ababab"></div>
<svg width="1920" height="1020" style="left:0;top:0">
 <path d="M920,973 v10 l-5,-5z" fill="#222"/>
 <path d="M1445,973 v10 l5,-5z" fill="#222"/>
</svg>

<!-- STATUS BAR -->
<div class="a" style="left:0;top:994px;width:1920px;height:26px;background:#f3f3f3"></div>
<div class="t" style="left:14px;top:1000px;font-size:13.5px;color:#333;letter-spacing:-0.60px">Ready</div>
<div class="a" style="left:1547px;top:994px;width:50px;height:26px;background:#c8c8c8"></div>
<svg width="1920" height="1020" style="left:0;top:0">
 <g fill="none" stroke="#666" stroke-width="1">
  <rect x="1564.5" y="999.5" width="15" height="14"/>
  <path d="M1569.5,999.5 v14 M1574.5,999.5 v14 M1564.5,1004 h15 M1564.5,1009 h15"/>
  <rect x="1613.5" y="999.5" width="14" height="14"/>
  <path d="M1616.5,1003.5 h8 M1616.5,1006.5 h8 M1616.5,1009.5 h8"/>
  <path d="M1663.5,1013.5 v-14 h16 v14 M1663.5,1008.5 h10 v-9 M1669.5,999.5 v6"/>
 </g>
 <path d="M1704,1006.5 h9 M1851,1006.5 h10 M1856,1001.5 v10" stroke="#555" stroke-width="1.2"/>
 <path d="M1720,1006.5 h125" stroke="#777" stroke-width="1"/>
 <rect x="1782" y="998" width="5" height="16" fill="#555"/>
</svg>
<div class="t" style="left:1877px;top:1001px;font-size:13.5px;color:#444;letter-spacing:-0.63px">110%</div>

<!-- PIVOT PANEL -->
<div class="a" style="left:1483px;top:250px;width:437px;height:744px;background:#e6e6e6"></div>
<div class="t" style="left:1497px;top:266px;font-size:26px;color:#262626;letter-spacing:-0.21px">PivotTable Fields</div>
<svg width="1920" height="1020" style="left:0;top:0">
 <path d="M1831,273 l9,9 l9,-9" fill="none" stroke="#444" stroke-width="1.3"/>
 <path d="M1885.5,271.5 l13,12 M1898.5,271.5 l-13,12" stroke="#444" stroke-width="1.3"/>
</svg>
<div class="t" style="left:1499px;top:317px;font-size:14.6px;color:#262626;letter-spacing:0.24px">Choose fields to add to report:</div>
<div class="box" style="left:1849px;top:306px;width:56px;height:35px;border-color:#ababab"></div>
<svg width="1920" height="1020" style="left:0;top:0">
 <g transform="translate(1870,323)">
  <circle r="5.5" fill="#8a8a8a"/>
  <g fill="#8a8a8a"><rect x="-1.8" y="-8.5" width="3.6" height="17"/><rect x="-1.8" y="-8.5" width="3.6" height="17" transform="rotate(45)"/><rect x="-1.8" y="-8.5" width="3.6" height="17" transform="rotate(90)"/><rect x="-1.8" y="-8.5" width="3.6" height="17" transform="rotate(135)"/></g>
  <circle r="2.3" fill="#fff"/>
 </g>
 <path d="M1891,321 h9 l-4.5,4.5z" fill="#222"/>
</svg>
<div class="box" style="left:1498px;top:357px;width:408px;height:30px;border-color:#c6c6c6"></div>
<div class="t" style="left:1506px;top:364px;font-size:14.3px;color:#777">Search</div>
<svg width="1920" height="1020" style="left:0;top:0">
 <circle cx="1892" cy="371" r="6.5" fill="none" stroke="#333" stroke-width="1.2"/>
 <path d="M1887,376 l-6.5,6.5" stroke="#333" stroke-width="1.3"/>
</svg>
<!-- field list -->
<div class="box" style="left:1498px;top:407px;width:407px;height:215px;border-color:#ababab"></div>
<div class="a" style="left:1884px;top:410px;width:19px;height:210px;background:#f0f0f0"></div>
<div class="a" style="left:1884px;top:410px;width:19px;height:20px;background:#fff;border:1px solid #ababab"></div>
<div class="a" style="left:1884px;top:429px;width:19px;height:103px;background:#fff;border:1px solid #ababab"></div>
<div class="a" style="left:1884px;top:600px;width:19px;height:20px;background:#fff;border:1px solid #ababab"></div>
<svg width="1920" height="1020" style="left:0;top:0">
 <path d="M1889,423 h9 l-4.5,-4.5z" fill="#222"/>
 <path d="M1889,607 h9 l-4.5,4.5z" fill="#222"/>
 <g fill="#fff" stroke="#7a7a7a" stroke-width="1">
  <rect x="1503.5" y="411.5" width="15" height="15"/>
  <rect x="1503.5" y="438.5" width="15" height="15"/>
  <rect x="1503.5" y="465.5" width="15" height="15"/>
  <rect x="1503.5" y="492.5" width="15" height="15"/>
  <rect x="1503.5" y="546.5" width="15" height="15"/>
 </g>
 <g fill="#217346">
  <rect x="1503" y="519" width="16" height="16"/>
  <rect x="1503" y="573" width="16" height="16"/>
  <rect x="1503" y="600" width="16" height="16"/>
 </g>
 <g fill="none" stroke="#fff" stroke-width="1.2">
  <path d="M1507,527 l3,3 l6,-6"/>
  <path d="M1507,581 l3,3 l6,-6"/>
  <path d="M1507,608 l3,3 l6,-6"/>
 </g>
</svg>
<div class="t" style="left:1526px;top:416px;font-size:14px;color:#262626;letter-spacing:-0.48px">CUSTOMER</div>
<div class="t" style="left:1526px;top:443px;font-size:14px;color:#262626;letter-spacing:-0.69px">PRODUCTS</div>
<div class="t" style="left:1526px;top:470px;font-size:14px;color:#262626;letter-spacing:-0.60px">SALES REGION</div>
<div class="t" style="left:1526px;top:497px;font-size:14px;color:#262626;letter-spacing:-0.44px">UNIQUE PURCHASES</div>
<div class="t" style="left:1526px;top:524px;font-size:14px;color:#262626;font-weight:bold;letter-spacing:-0.47px">SALES PERSON</div>
<div class="t" style="left:1526px;top:551px;font-size:14px;color:#262626;letter-spacing:-0.27px">ORDER DATE</div>
<div class="t" style="left:1526px;top:578px;font-size:14px;color:#262626;font-weight:bold;letter-spacing:-0.73px">SALES</div>
<div class="t" style="left:1526px;top:605px;font-size:14px;color:#262626;font-weight:bold;letter-spacing:0.38px">FINANCIAL YEAR</div>
<div class="a" style="left:1500px;top:641px;width:408px;height:0;border-top:1px dotted #c0c0c0"></div>
<div class="t" style="left:1503px;top:650px;font-size:14.6px;color:#262626;letter-spacing:0.16px">Drag fields between areas below:</div>
<!-- areas -->
<div class="a" style="left:1703px;top:687px;width:1px;height:238px;background:#c6c6c6"></div>
<div class="a" style="left:1502px;top:805px;width:404px;height:1px;background:#c6c6c6"></div>
<div class="a" style="left:1502px;top:713px;width:194px;height:85px;background:#fff"></div>
<div class="a" style="left:1706px;top:713px;width:200px;height:85px;background:#fff"></div>
<div class="a" style="left:1502px;top:839px;width:194px;height:86px;background:#fff"></div>
<div class="a" style="left:1706px;top:839px;width:200px;height:86px;background:#fff"></div>
<svg width="1920" height="1020" style="left:0;top:0">
 <path d="M1507,690 h14 l-5,6 v8 h-4 v-8z" fill="#8a8a8a"/>
 <g fill="#8a8a8a"><rect x="1712" y="692" width="3" height="11"/><rect x="1716" y="692" width="1" height="11"/><rect x="1718" y="692" width="1" height="11"/><rect x="1720" y="692" width="1" height="11"/><rect x="1722" y="692" width="1" height="11"/></g>
 <g fill="#8a8a8a"><rect x="1508" y="818" width="12" height="2"/><rect x="1508" y="822" width="12" height="1"/><rect x="1508" y="825" width="12" height="1"/><rect x="1508" y="828" width="12" height="1"/></g>
 <path d="M1724,818 h-11 l5,5.5 l-5,5.5 h11" fill="none" stroke="#8a8a8a" stroke-width="1.5"/>
</svg>
<div class="t" style="left:1530px;top:692px;font-size:14.3px;color:#262626">Filters</div>
<div class="t" style="left:1734px;top:692px;font-size:14.3px;color:#262626">Columns</div>
<div class="t" style="left:1530px;top:818px;font-size:14.3px;color:#262626">Rows</div>
<div class="t" style="left:1734px;top:818px;font-size:14.3px;color:#262626">Values</div>
<div class="box" style="left:1707px;top:715px;width:198px;height:26px;border-color:#c6c6c6"></div>
<div class="box" style="left:1707px;top:743px;width:198px;height:26px;border-color:#c6c6c6"></div>
<div class="box" style="left:1503px;top:841px;width:192px;height:26px;border-color:#c6c6c6"></div>
<div class="box" style="left:1707px;top:841px;width:198px;height:26px;border-color:#c6c6c6"></div>
<div class="box" style="left:1707px;top:869px;width:198px;height:26px;border-color:#c6c6c6"></div>
<svg width="1920" height="1020" style="left:0;top:0">
 <g fill="#222">
  <path d="M1884,727 h9 l-4.5,4.5z"/>
  <path d="M1884,755 h9 l-4.5,4.5z"/>
  <path d="M1674,853 h9 l-4.5,4.5z"/>
  <path d="M1884,853 h9 l-4.5,4.5z"/>
  <path d="M1884,881 h9 l-4.5,4.5z"/>
 </g>
 <path d="M1731,750 h-11 l5,5.5 l-5,5.5 h11" fill="none" stroke="#777" stroke-width="1.3"/>
</svg>
<div class="t" style="left:1716px;top:721px;font-size:14px;color:#262626;letter-spacing:-0.17px">FINANCIAL YEAR</div>
<div class="t" style="left:1738px;top:749px;font-size:14.3px;color:#262626">Values</div>
<div class="t" style="left:1512px;top:847px;font-size:14px;color:#262626;letter-spacing:-0.76px">SALES PERSON</div>
<div class="t" style="left:1716px;top:847px;font-size:14px;color:#262626;letter-spacing:-0.16px">Sum of SALES</div>
<div class="t" style="left:1716px;top:875px;font-size:14.3px;color:#262626;letter-spacing:0.2px">% Diff. from Kalyani Sen</div>
<!-- defer -->
<div class="box" style="left:1506px;top:957px;width:16px;height:16px;border-color:#7a7a7a"></div>
<div class="t" style="left:1530px;top:959px;font-size:14.3px;color:#262626;letter-spacing:0.27px">Defer Layout Update</div>
<div class="a" style="left:1843px;top:949px;width:62px;height:32px;background:#fcfcfc;border:1px solid #dadada"></div>
<div class="t" style="left:1850px;top:958px;font-size:14.3px;color:#b5b5b5;letter-spacing:0.48px">Update</div>
<div class="a" style="left:1482px;top:250px;width:1px;height:741px;background:#c6c6c6"></div>
<div class="a" style="left:0;top:993px;width:1920px;height:1px;background:#cfcfcf"></div>

</body></html>
